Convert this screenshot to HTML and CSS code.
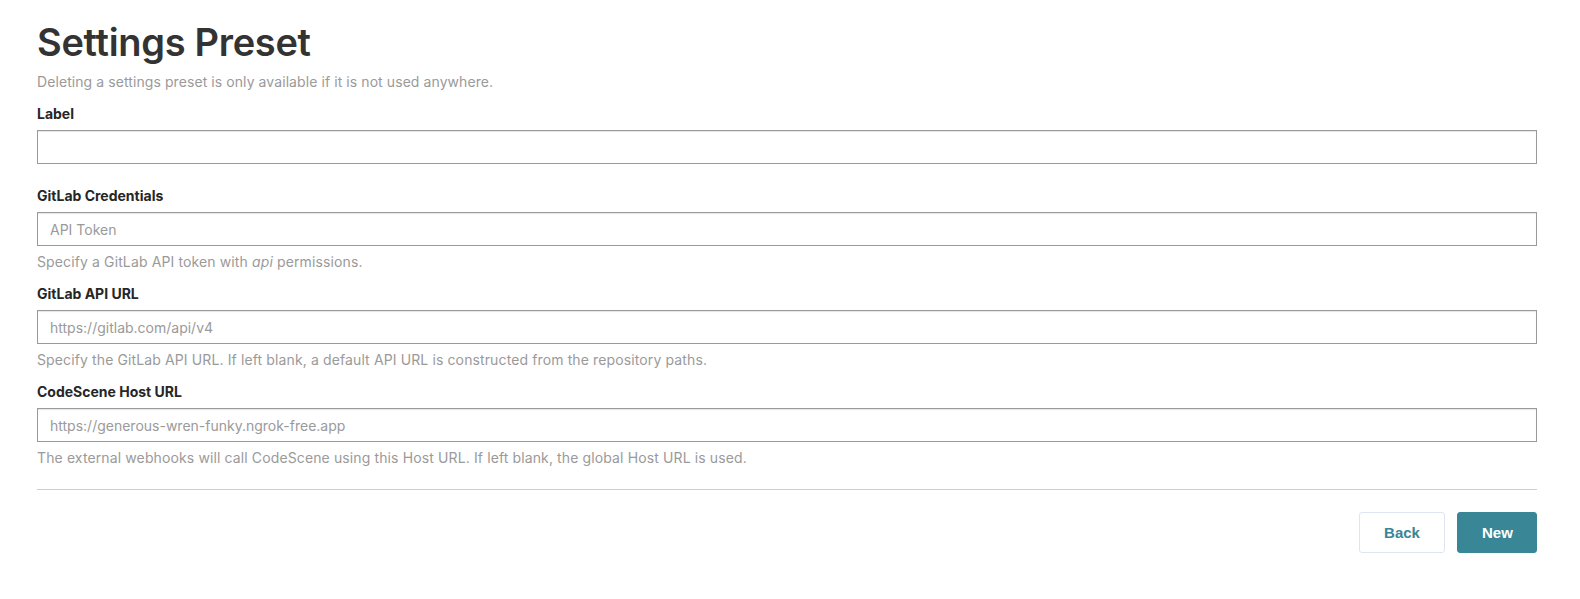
FILE: index.html
```html
<!DOCTYPE html>
<html>
<head>
<meta charset="utf-8">
<link rel="stylesheet" href="styles.css">
</head>
<body>
<div class="page">
  <h1 class="title">Settings Preset</h1>
  <p class="subtitle">Deleting a settings preset is only available if it is not used anywhere.</p>

  <div class="field field-first">
    <label class="field-label">Label</label>
    <input class="field-input" type="text">
  </div>

  <div class="field">
    <label class="field-label">GitLab Credentials</label>
    <input class="field-input" type="text" placeholder="API Token">
    <p class="field-help">Specify a GitLab API token with <em>api</em> permissions.</p>
  </div>

  <div class="field">
    <label class="field-label">GitLab API URL</label>
    <input class="field-input" type="text" placeholder="https://gitlab.com/api/v4">
    <p class="field-help">Specify the GitLab API URL. If left blank, a default API URL is constructed from the repository paths.</p>
  </div>

  <div class="field">
    <label class="field-label">CodeScene Host URL</label>
    <input class="field-input" type="text" placeholder="https://generous-wren-funky.ngrok-free.app">
    <p class="field-help">The external webhooks will call CodeScene using this Host URL. If left blank, the global Host URL is used.</p>
  </div>

  <hr class="divider">

  <div class="actions">
    <button class="btn btn-secondary">Back</button>
    <button class="btn btn-primary">New</button>
  </div>
</div>
</body>
</html>
```

FILE: styles.css
```css
* { box-sizing: border-box; }

body {
  margin: 0;
  background: #fff;
  font-family: "Inter", "Noto Sans", sans-serif;
  color: #222;
}

.page {
  width: 1500px;
  margin-left: 37px;
  padding-top: 19px;
}

.title {
  margin: 0;
  font-size: 38px;
  line-height: 46px;
  font-weight: 600;
  color: #333;
  letter-spacing: -0.3px;
}

.subtitle {
  margin: 7px 0 0;
  font-size: 14px;
  line-height: 20px;
  color: #9a9a9a;
  letter-spacing: 0.08px;
}

.field {
  display: flex;
  flex-direction: column;
  margin-top: 12px;
}

.field-first {
  margin-bottom: 22px;
}

.field-label {
  font-size: 14px;
  line-height: 20px;
  font-weight: 700;
  color: #262626;
  margin-bottom: 6px;
}

.field-input {
  display: block;
  width: 100%;
  height: 34px;
  border: 1px solid #9a9a9a;
  border-radius: 0;
  box-shadow: inset 0 1px 1px rgba(0, 0, 0, 0.1);
  padding: 0 12px;
  font-family: "Inter", "Noto Sans", sans-serif;
  font-size: 14px;
  color: #333;
  background: #fff;
  outline: none;
}

.field-input::placeholder {
  color: #9a9a9a;
}

.field-help {
  margin: 6px 0 0;
  font-size: 14px;
  line-height: 20px;
  color: #9a9a9a;
  letter-spacing: 0.12px;
}

.divider {
  margin: 21px 0 0;
  border: 0;
  border-top: 1px solid #cfcfcf;
  height: 0;
}

.actions {
  display: flex;
  justify-content: flex-end;
  gap: 12px;
  margin-top: 22px;
}

.btn {
  height: 41px;
  padding: 0 24px;
  border-radius: 3px;
  font-family: "Liberation Sans", Arial, sans-serif;
  font-size: 15px;
  font-weight: 700;
  cursor: pointer;
}

.btn-secondary {
  background: #fff;
  border: 1px solid #dfe5f0;
  color: #3a8597;
  width: 86px;
}

.btn-primary {
  background: #388696;
  border: 1px solid #388696;
  color: #fff;
  width: 80px;
}
```
